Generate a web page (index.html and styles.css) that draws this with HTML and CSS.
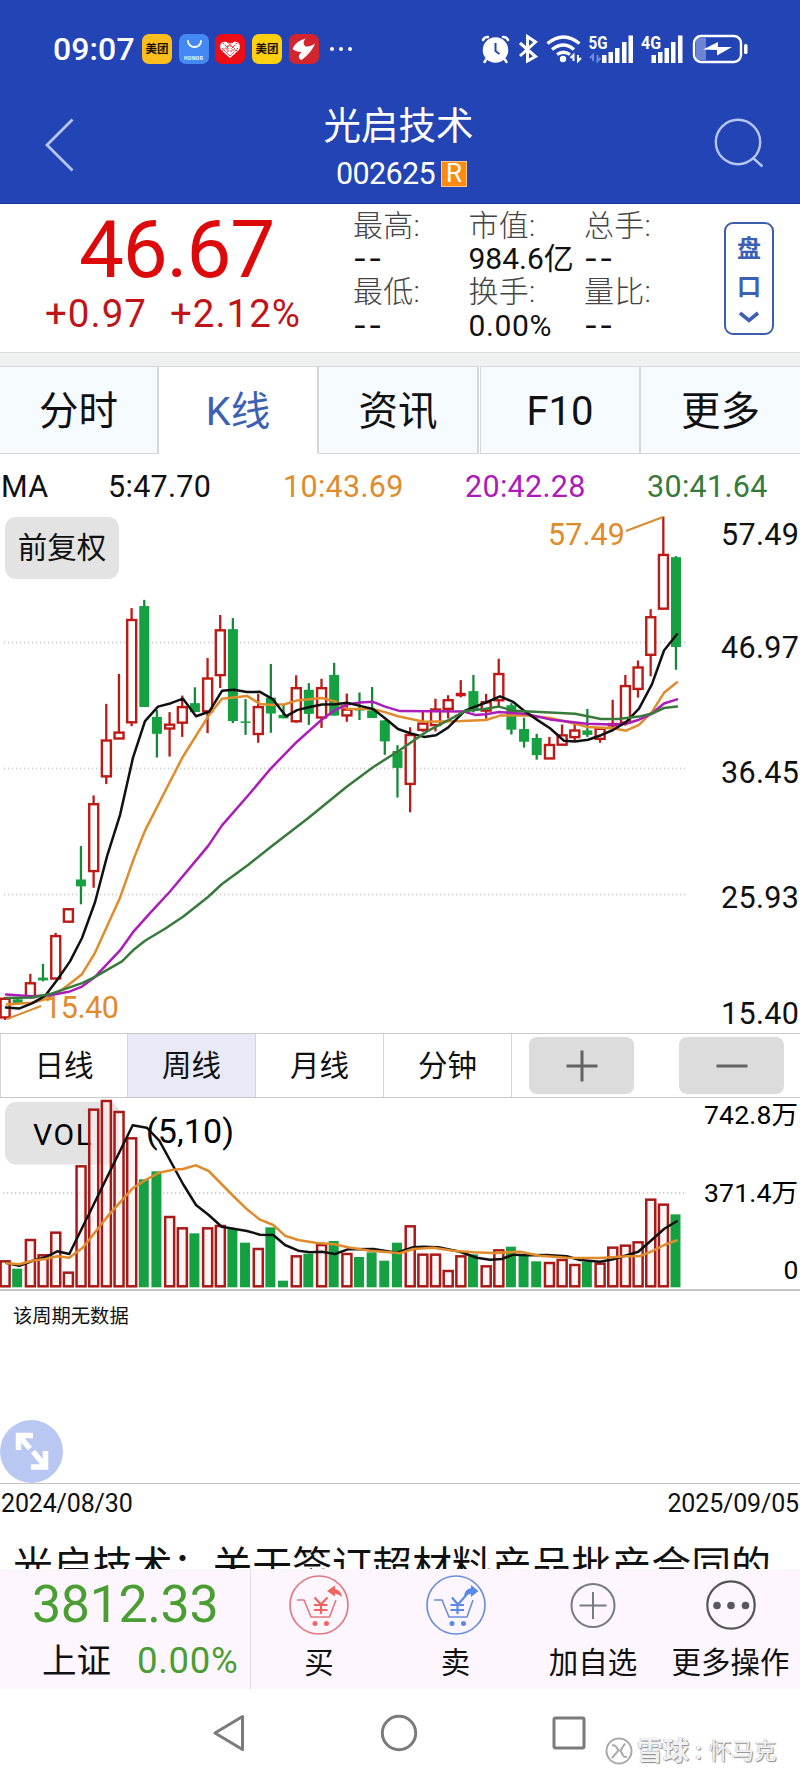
FILE: index.html
```html
<!DOCTYPE html>
<html lang="zh-CN">
<head>
<meta charset="utf-8">
<title>光启技术 002625</title>
<link rel="stylesheet" href="styles.css">
</head>
<body>
<div class="phone">
  <header class="top">
    <div class="status">
      <span class="clock">09:07</span>
      <div class="apps">
        <span class="app app-mt">美团</span>
        <span class="app app-honor"><svg width="30" height="30" viewBox="0 0 30 30"><path d="M9 7a6.5 6 0 0 0 13 0" fill="none" stroke="#fff" stroke-width="1.8" stroke-linecap="round"/></svg><b>HONOR</b></span>
        <span class="app app-heart"><svg width="30" height="30" viewBox="0 0 30 30"><path d="M15 24L6.500 16.500C2.500 11 7.500 4.500 15 9.500C22.500 4.500 27.500 11 23.500 16.500Z" fill="#fff"/><path d="M8 9l6 6M7 14l8 8M12 8l11 10M22 9l-6 6M23 14l-8 8M18 8L7 17M12 12h6v5h-6z" stroke="#ec2028" stroke-width="1" fill="none" stroke-dasharray="2 1"/></svg></span>
        <span class="app app-mt mt2">美团</span>
        <span class="app app-bird"><svg width="30" height="30" viewBox="0 0 30 30"><path d="M16.500 4.500C14 8 14 10 16.500 12.500C20 13 23 11.500 26 9.500C23 17 18 22 12.500 26C9 25 9 21 12.500 18C9 18 5.500 17 3.500 15C6 9 11 6 16.500 4.500Z" fill="#fff"/></svg></span>
      </div>
      <span class="more"><i></i><i></i><i></i></span>
      <svg class="sys" width="270" height="34" viewBox="480 32 270 34" fill="none" stroke="#fff">
        <g stroke-width="2.500" stroke-linecap="round"><circle cx="496.500" cy="50" r="11.500" fill="#fff"/><path d="M484 40q1-3 5-3M509 40q-1-3-5-3M487.500 59l-2 3M505.500 59l2 3"/></g>
        <path d="M496.500 43v8l4 3" stroke="#2244b4" stroke-width="2"/>
        <path d="M521 43l15.500 13.500L528.500 61V36.500l8 5.500L521 56" stroke-width="3"/>
        <g stroke-width="3.200"><path d="M548.500 43.500q16-13 32 0M553 49.500q11.500-9 22 0M558 54.500q6.500-4.500 13 0"/></g>
        <circle cx="564" cy="59" r="3.200" fill="#fff" stroke="none"/>
        <path d="M574.500 61v-6l-3 3M579 55v6l3-3" stroke-width="2"/>
        <path d="M594 61v-6l-3 3M598.500 55v6l3-3" stroke="#6f8ae0" stroke-width="2"/>
        <g fill="#fff" stroke="none">
          <path d="M603 55h4.500v8h-4.500zM609.500 52h4.500v11h-4.500zM616 48h4.500v15h-4.500zM623 42h4.500v21h-4.500zM629.500 35.500h4.500v27.500h-4.500zM652.500 55h4.500v8h-4.500zM659 52h4.500v11h-4.500zM665.500 48h4.500v15h-4.500zM672 42h4.500v21h-4.500zM679 35.500h4.500v27.500h-4.500z"/>
          <text x="589.500" y="49" class="net" textLength="19" lengthAdjust="spacingAndGlyphs">5G</text>
          <text x="642" y="49" class="net" textLength="20" lengthAdjust="spacingAndGlyphs">4G</text>
          <path d="M697 38h10v22h-10z" fill="#6c84d4"/>
          <path d="M704 49.500l15-7.500v5h14l-15 8.500v-5.500z"/>
          <rect x="745" y="44" width="3.500" height="10" rx="1.500"/>
        </g>
        <rect x="695" y="36" width="47" height="26" rx="7" stroke-width="2.400"/>
      </svg>
    </div>
    <div class="bar">
      <svg class="back" width="34" height="58" viewBox="0 0 34 58"><path d="M30.500 3.500L5 29L30.500 54.500" fill="none" stroke="#b5c6f4" stroke-width="2.800"/></svg>
      <div class="name"><h1>光启技术</h1><p><span>002625</span><b>R</b></p></div>
      <svg class="search" width="52" height="52" viewBox="0 0 52 52"><g fill="none" stroke="#b5c6f4" stroke-width="2.400"><circle cx="24" cy="25" r="22.200"/><path d="M39 41l9.500 8.500"/></g></svg>
    </div>
  </header>

  <section class="quote">
    <div class="price"><div class="last">46.67</div><div class="chg"><span>+0.97</span><span>+2.12%</span></div></div>
    <dl><dt>最高:</dt><dd class="none">--</dd><dt>最低:</dt><dd class="none">--</dd></dl>
    <dl><dt>市值:</dt><dd>984.6亿</dd><dt>换手:</dt><dd class="wide">0.00%</dd></dl>
    <dl><dt>总手:</dt><dd class="none">--</dd><dt>量比:</dt><dd class="none">--</dd></dl>
    <div class="pankou"><span>盘</span><span>口</span><svg width="22" height="12" viewBox="0 0 22 12"><path d="M2 2l9 7.500L20 2" fill="none" stroke="#3c60b4" stroke-width="3.600"/></svg></div>
  </section>

  <nav class="tabs"><span>分时</span><span class="on">K线</span><span>资讯</span><span class="f10">F10</span><span>更多</span></nav>

  <div class="ma"><span>MA</span><span>5:47.70</span><span class="o">10:43.69</span><span class="m">20:42.28</span><span class="g">30:41.64</span></div>

  <section class="kline">
    <svg width="800" height="518" viewBox="0 515 800 518">
      <path class="grid" d="M4 642.500H687M4 768.500H687M4 894.500H687"/>
      <g id="candles"></g>
      <g id="averages"></g>
      <path d="M626 531L663 517M7 1019L41 1006" class="lead"/>
      <g class="tag"><text x="548" y="545" textLength="77">57.49</text><text x="44" y="1018" textLength="75">15.40</text></g>
      <g class="axis"><text x="721" y="545" textLength="78">57.49</text><text x="721" y="658" textLength="78">46.97</text><text x="721" y="783" textLength="78">36.45</text><text x="721" y="908" textLength="78">25.93</text><text x="721" y="1024" textLength="78">15.40</text></g>
    </svg>
    <span class="adjust">前复权</span>
  </section>

  <div class="periods">
    <span>日线</span><span class="on">周线</span><span>月线</span><span>分钟</span>
    <button><svg width="32" height="32" viewBox="0 0 32 32"><path d="M0.500 16H31.500M16 0.500V31.500" stroke="#626262" stroke-width="3"/></svg></button>
    <button><svg width="32" height="32" viewBox="0 0 32 32"><path d="M0.500 16H31.500" stroke="#626262" stroke-width="3"/></svg></button>
  </div>

  <section class="volume">
    <svg width="800" height="191" viewBox="0 1098 800 191">
      <rect x="5" y="1102" width="114" height="62.500" rx="11" fill="#e3e3e3"/>
      <text x="33" y="1144.500" class="vol" textLength="59">VOL</text>
      <path class="grid" d="M3 1193H687"/>
      <g id="volumes"></g>
      <text x="146" y="1143" class="param" textLength="88">(5,10)</text>
      <g class="vaxis"><text x="704" y="1124" textLength="94">742.8万</text><text x="704" y="1201.500" textLength="94">371.4万</text><text x="783.500" y="1279">0</text></g>
    </svg>
  </section>

  <section class="empty">
    <p>该周期无数据</p>
    <svg width="63" height="63" viewBox="0 0 63 63"><circle cx="31.500" cy="31.500" r="31.500" fill="#b8c8f3"/><path d="M18.500 30V15.500H33M19 16L30 28.500M31 47H45.500V31M33 31.500L45 46" fill="none" stroke="#fff" stroke-width="5.500"/></svg>
  </section>
  <div class="dates"><span>2024/08/30</span><span>2025/09/05</span></div>
  <div class="news"><p>光启技术：关于签订超材料产品批产合同的</p></div>

  <footer class="actions">
    <div class="index"><strong>3812.33</strong><p><span>上证</span><em>0.00%</em></p></div>
    <div class="act a1"><svg width="60" height="60" viewBox="0 0 60 60" fill="none" stroke="#e47880"><circle cx="30" cy="30" r="29" stroke-width="1.700"/><path d="M8 25h7l7 17h18.500L47 25" stroke-width="1.600"/><path d="M25.500 22.500l6.500 7 6.500-7M25 30h13.500M25 35h13.500M32 29v10" stroke="#f0655f" stroke-width="2.200"/><g fill="#f0655f" stroke="none"><circle cx="26" cy="48.500" r="2.500"/><circle cx="37.500" cy="48.500" r="2.500"/><path d="M38 16l8-5.500v3.500q6 1 7 8-3-3-7-3.500v3z"/></g></svg><span>买</span></div>
    <div class="act a2"><svg width="60" height="60" viewBox="0 0 60 60" fill="none" stroke="#6b8fdb"><circle cx="30" cy="30" r="29" stroke-width="1.700"/><path d="M8 25h8l7 17h18L47 25" stroke-width="1.600"/><path d="M26 22.500l6 7L42 18M24.500 30H38M24.500 35H38M31.500 29v10" stroke="#5a8ae8" stroke-width="2.200"/><g fill="#5a8ae8" stroke="none"><circle cx="26" cy="48.500" r="2.500"/><circle cx="37.500" cy="48.500" r="2.500"/><path d="M38 21q1-7 7-8V10l7.500 6-7.500 6v-3q-3 0-7 2z"/></g></svg><span>卖</span></div>
    <div class="act a3"><svg width="60" height="60" viewBox="0 0 60 60" fill="none" stroke="#777b88" stroke-width="2"><circle cx="30" cy="30.500" r="21.500"/><path d="M16.500 30.500h27M30 17v27"/></g></svg><span>加自选</span></div>
    <div class="act a4"><svg width="60" height="60" viewBox="0 0 60 60"><circle cx="30" cy="30" r="23.700" fill="none" stroke="#555" stroke-width="2.200"/><g fill="#58585e"><circle cx="16" cy="30.500" r="3.800"/><circle cx="30" cy="30.500" r="3.800"/><circle cx="44.500" cy="30.500" r="3.800"/></g></svg><span>更多操作</span></div>
  </footer>

  <div class="sysnav">
    <svg width="32" height="38" viewBox="0 0 32 38"><path d="M2 19L29.500 2.500V35.500Z" stroke-linejoin="round"/></svg>
    <svg width="38" height="38" viewBox="0 0 38 38"><circle cx="19" cy="19" r="16.700"/></svg>
    <svg width="34" height="34" viewBox="0 0 34 34"><rect x="2" y="2" width="30" height="30" rx="1.500"/></svg>
    <div class="mark">
      <svg width="28" height="28" viewBox="0 0 28 28"><circle cx="14" cy="14" r="12.500"/><path d="M7 8.500q2.500-1 4 1l2.500 4L7 21M20 6.500l-4.500 7 2.500 5q1.500 2.500 4 1"/></svg>
      <b>雪球</b><i>:</i><span>怀马克</span>
    </div>
  </div>
</div>
<script src="chart.js"></script>
</body>
</html>
```

FILE: styles.css
```css
* { box-sizing: border-box; margin: 0; padding: 0; }
body { width: 800px; height: 1776px; overflow: hidden; background: #fff; color: #111; font-family: Roboto, "Noto Sans CJK SC", sans-serif; font-weight: 400; }
svg { display: block; flex: none; }
.phone { width: 800px; height: 1776px; display: flex; flex-direction: column; overflow: hidden; }
.phone > * { flex: none; }

.top { height: 204px; background: #2244b4; color: #fff; border-bottom: 1px solid #1b3694; }
.status { height: 66px; padding: 32px 51px 0 53px; display: flex; }
.clock { width: 89px; font-size: 32px; font-weight: 500; line-height: 34px; letter-spacing: .1px; }
.apps { display: flex; gap: 6.7px; padding-top: 2px; }
.app { width: 30px; height: 30px; border-radius: 7px; overflow: hidden; display: flex; flex-direction: column; }
.app-mt { background: #fdbd1c; color: #1c1305; font-size: 11.5px; font-weight: 700; line-height: 30px; align-items: center; }
.mt2 { background: #fed00f; }
.app-honor { background: #4489f3; align-items: center; }
.app-honor b { font-size: 5px; line-height: 6px; margin-top: -9px; letter-spacing: .4px; }
.app-heart { background: #ec0d16; }
.app-bird { background: #d2262f; }
.more { display: flex; gap: 4.500px; padding: 14.500px 0 0 11px; }
.more i { width: 4.500px; height: 4.500px; border-radius: 50%; background: #fff; }
.sys { margin-left: auto; }
.net { font-size: 19px; font-weight: 700; }
.bar { height: 137px; padding: 35px 34px 0 42px; display: flex; justify-content: space-between; }
.back { margin-top: 15px; }
.search { margin-top: 16px; }
.name { text-align: center; padding-left: 7px; }
h1 { font-size: 37.500px; line-height: 46px; font-weight: 400; padding-top: 2px; }
.name p { display: flex; justify-content: center; align-items: center; gap: 6px; margin-top: 9px; padding-left: 6px; font-size: 30.500px; line-height: 32px; letter-spacing: -.6px; }
.name b { width: 26px; height: 26px; margin-top: 0; background: #ff8a12; border: 1px solid #ffc98e; font-size: 26px; line-height: 23px; font-weight: 400; letter-spacing: 0; }

.quote { height: 149px; display: flex; border-bottom: 1px solid #d9dddc; }
.price { width: 353px; padding-top: 6px; color: #dc0a0a; }
.last { padding-left: 79px; font-size: 80px; line-height: 80px; letter-spacing: -1.200px; }
.chg { display: flex; gap: 23px; padding-left: 45px; margin-top: 0; font-size: 38.500px; line-height: 48px; letter-spacing: 1px; color: #c01418; }
.quote dl { width: 115.500px; padding-top: 4.500px; font-size: 30px; line-height: 33.400px; white-space: nowrap; }
.quote dt { color: #444; font-weight: 300; letter-spacing: .3px; }
.quote dd { height: 33.400px; }
.quote .none { font-family: Inter, sans-serif; letter-spacing: 1.500px; }
.quote .wide { letter-spacing: .6px; }
.pankou { width: 50px; height: 113px; margin: 18px 0 0 24.500px; border: 2px solid #3d5ea9; border-radius: 9px; color: #3c60b4; display: flex; flex-direction: column; align-items: center; font-size: 24px; font-weight: 700; line-height: 38px; padding-top: 6px; }
.pankou svg { margin-top: 5px; }

.tabs { height: 101px; border-top: 13px solid #edf1f0; display: flex; }
.tabs span { width: 160px; background: #f6fbff; border: solid #d4d8da; border-width: 1px 2px 1px 0; text-align: center; font-size: 39.500px; line-height: 90px; }
.tabs span:first-child { width: 159px; }
.tabs .on { background: #fff; color: #3c60b4; border-bottom-color: #fff; }
.tabs .f10 { width: 161px; border-left: 1px solid #d4d8da; margin-left: 1px; font-size: 40px; }
.tabs span:last-child { width: 159px; border-right: 0; }

.ma { height: 61px; display: grid; grid-template-columns: 107px 175px 182px 182px 1fr; padding-left: 1px; font-size: 30.500px; line-height: 66px; letter-spacing: .3px; }
.o { color: #e08b2c; } .m { color: #ac1cb8; } .g { color: #387a3b; }

.kline { height: 518px; position: relative; }
.adjust { position: absolute; left: 5px; top: 2px; width: 114px; height: 62px; border-radius: 11px; background: #e3e3e3; text-align: center; font-size: 29.500px; line-height: 62px; }
.grid { stroke: #d2d2d2; stroke-width: 2; stroke-dasharray: 1.300 2.700; }
.lead { stroke: #d98a35; stroke-width: 2; }
.tag { fill: #e08b2c; font-size: 30.500px; }
.axis { font-size: 30.500px; fill: #111; }
.up-line { stroke: #bd1a17; stroke-width: 2.300; fill: none; }
.up-box { stroke: #bd1a17; stroke-width: 2.400; fill: #fff; }
.up-solid { fill: #cf1013; }
.down-line { stroke: #16883a; stroke-width: 2.300; fill: none; }
.down-box { fill: #15a042; }
.vol-box { stroke: #a81a18; stroke-width: 2.500; fill: #fff0f0; fill-opacity: .5; }
.avg { fill: none; stroke-width: 2.500; stroke-linejoin: round; stroke-linecap: round; }

.periods { height: 65px; border: solid #c9c9c9; border-width: 1px 0; display: flex; align-items: center; }
.periods span { width: 128px; height: 63px; border-right: 1px solid #d4d4da; text-align: center; font-size: 29.500px; line-height: 64px; }
.periods span:first-child { border-left: 1px solid #d4d4da; }
.periods .on { background: #e8eaf7; }
.periods button { width: 105px; height: 57px; margin-left: 17px; border: 0; border-radius: 8px; background: #dcdcdc; display: flex; align-items: center; justify-content: center; }
.periods button + button { margin-left: 45px; }

.volume { height: 193px; border-bottom: 2px solid #c5c5c5; overflow: hidden; }
.vol { font-size: 30px; }
.param { font-size: 34px; }
.vaxis { font-size: 26.500px; }

.empty { height: 193px; border-bottom: 1px solid #c5c5c5; display: flex; flex-direction: column; justify-content: space-between; }
.empty p { padding: 12px 0 0 13px; font-size: 19.300px; line-height: 28px; }
.dates { height: 59px; display: flex; justify-content: space-between; padding: 0 1px; font-size: 25px; line-height: 39px; letter-spacing: -.15px; }
.news { height: 26px; overflow: hidden; padding-left: 13px; }
.news p { font-size: 39.900px; line-height: 40px; margin-top: 0; white-space: nowrap; font-family: "Noto Sans CJK SC", sans-serif; }

.actions { height: 120px; background: #fdf6fe; display: flex; }
.index { width: 251px; height: 120px; border-right: 1px solid #e2dce3; color: #4a9e32; }
.index strong { display: block; padding-left: 32px; font-size: 52px; line-height: 72px; font-weight: 400; letter-spacing: -.4px; }
.index p { display: flex; padding-left: 42px; gap: 26px; line-height: 40px; }
.index span { color: #111; font-size: 34.500px; }
.index em { font-style: normal; font-size: 36.500px; letter-spacing: .7px; }
.act { display: flex; flex-direction: column; align-items: center; padding-top: 6px; font-size: 29.500px; }
.act span { line-height: 44px; margin-top: 6px; }
.a1 { width: 136px; }
.a2 { width: 137px; }
.a3 { width: 138px; }
.a4 { width: 137px; }

.sysnav { height: 87px; display: flex; align-items: center; position: relative; padding: 0 0 0 213px; }
.sysnav svg { fill: none; stroke: #7b7b7b; stroke-width: 3; }
.sysnav > svg:nth-child(2) { margin-left: 135px; }
.sysnav > svg:nth-child(3) { margin-left: 134px; }
.mark { position: absolute; left: 605px; top: 46px; display: flex; align-items: center; height: 32px; color: #f2f2f2; text-shadow: 1px 1px 1px #888, -.5px -.5px 1px #bbb; line-height: 32px; white-space: nowrap; }
.mark svg { stroke: #a9a9a9; stroke-width: 2; }
.mark b { font-size: 26px; margin-left: 4px; }
.mark i { font-style: normal; font-size: 24px; font-weight: 700; width: 20px; padding-left: 6px; }
.mark span { font-size: 22.500px; }
```

FILE: chart.js
```js
// Weekly candles: direction, high, body top, body bottom, low (plot units).
const candles = [
  ['r',1443,1447,1504,1510],['g',1447,1450,1463,1465],['r',1376,1402,1445,1447],['g',1347,1387,1395,1398],
  ['r',1257,1265,1391,1391],['r',1187,1187,1226,1226],['g',1005,1102,1122,1174],['r',858,882,1079,1126],
  ['r',592,697,804,825],['r',505,674,694,694],['r',314,347,647,657],['g',290,308,601,601],
  ['g',610,630,679,748],['r',616,651,665,745],['r',568,600,648,688],['g',544,590,616,616],
  ['r',459,517,615,677],['r',334,377,510,546],['g',343,375,642,648],['g',578,643,647,682],
  ['r',563,600,681,705],['g',476,574,620,676],['g',593,624,634,634],['r',509,545,644,647],
  ['g',532,551,621,653],['r',519,545,633,662],['g',473,508,626,626],['r',562,607,627,644],
  ['g',559,607,611,639],['g',543,611,633,633],['g',639,640,701,740],['g',712,729,778,864],
  ['r',660,681,826,907],['r',612,648,669,673],['r',577,607,655,672],['r',567,580,608,634],
  ['s',523,560,570,573],['g',508,555,613,617],['r',563,586,613,635],['r',461,504,583,600],
  ['g',590,596,667,681],['g',632,665,702,719],['g',679,691,741,754],['r',688,710,752,752],
  ['r',652,682,712,712],['r',650,668,690,700],['g',607,669,682,688],['r',660,663,695,705],
  ['s',580,647,658,663],['r',508,539,648,655],['r',466,485,550,574],['r',317,339,451,512],
  ['r',48,158,317,317],['g',163,166,427,493]
];
const averages = {
  '#e08b2c': [6.7,1465,32,1460,45,1450,63,1420,82,1377,95,1315,120,1155,134,1040,145,960,167,835,183,745,209,625,222,577,247,569,260,592,273,595,285,593,297,582,322,575,335,585,347,606,373,607,385,616,398,628,424,644,462,642,486,639,500,626,525,625,550,633,575,650,587,659,613,663,626,670,639,653,652,615,664,560,677,529],
  '#ac1cb8': [6,1436,32,1441,50,1438,70,1427,82,1413,95,1385,120,1308,133,1255,150,1200,170,1137,208,1005,222,945,247,862,271,779,297,702,322,637,335,610,347,594,360,588,373,586,385,600,400,613,463,614,475,624,486,622,499,616,525,621,550,637,587,650,613,652,626,650,639,638,652,620,664,591,677,579],
  '#111': [6,1474,19,1477,32,1462,45,1440,58,1390,70,1340,82,1272,95,1168,107,1035,120,915,133,748,145,642,158,600,171,590,183,577,196,628,209,615,222,554,234,551,247,558,260,557,273,579,286,628,297,610,310,601,322,594,335,593,347,589,360,598,373,607,385,634,398,665,411,678,424,688,436,683,448,661,465,612,486,588,500,570,513,586,525,614,538,640,550,663,564,699,575,701,588,696,601,683,613,668,626,645,639,606,652,535,664,437,677,390],
  '#387a3b': [6,1446,32,1445,50,1435,82,1403,95,1385,122,1340,134,1305,145,1280,165,1245,183,1210,208,1153,222,1115,248,1060,271,1007,308,924,347,832,373,776,400,726,427,672,448,640,465,613,486,606,499,600,513,612,540,616,575,621,601,636,618,636,639,629,652,620,664,604,677,600]
};
const volumes = 'r721 g746 r657 r703 r635 r755 r436 r266 r240 r273 r352 g478 g454 r588 r622 g640 r622 r615 g627 g668 r684 g622 g782 r706 g701 r672 g663 r699 g711 g697 g722 g668 r616 r701 r701 r750 r706 g703 r736 r688 g680 g707 g724 r726 r717 r732 g726 r728 r680 r674 r664 r536 r551 g583'.split(' ');
const volumeAverages = {
  '#111': [20,729,58,737,97,723,135,712,172,694,208,702,322,470,398,316,440,323,478,362,549,492,588,555,626,585,665,620,741,633,780,644,820,645,855,675,895,692,930,697,965,695,1005,702,1043,688,1120,687,1190,698,1240,682,1270,680,1315,682,1380,695,1430,713,1470,719,1505,717,1540,704,1585,706,1640,705,1700,709,1740,720,1800,725,1840,718,1880,706,1915,695,1955,660,1993,626,2030,604],
  '#e08b2c': [20,730,58,733,97,722,135,717,172,709,208,713,250,682,322,590,398,505,440,478,478,458,520,449,549,447,588,436,626,453,700,528,741,568,780,599,820,615,855,647,895,660,950,669,1005,673,1043,682,1110,692,1170,697,1200,700,1240,687,1300,683,1360,692,1420,697,1480,699,1560,695,1620,707,1700,713,1800,714,1880,709,1920,708,1955,694,1993,675,2030,661]
};

const priceY = v => 500 + v / 2.904;
const volumeY = v => 1020 + v / 3;
const centre = i => 5 + 12.66 * i;

const hollow = (cls, x, y0, y1) =>
  `<rect class="${cls}" x="${x - 4.4}" y="${y0 + 1}" width="9" height="${Math.max(1, y1 - y0 - 2)}"/>`;
const solid = (cls, x, y0, y1) =>
  `<rect class="${cls}" x="${x - 5}" y="${y0}" width="10" height="${Math.max(1.5, y1 - y0)}"/>`;

function polyline(points, sx, fy, colour) {
  let d = '';
  for (let i = 0; i < points.length; i += 2) {
    d += `${i ? 'L' : 'M'}${(points[i] / sx).toFixed(1)} ${fy(points[i + 1]).toFixed(1)}`;
  }
  return `<path class="avg" d="${d}" stroke="${colour}"/>`;
}

// The body is drawn over the wick.
document.getElementById('candles').innerHTML = candles.map(([kind, ...values], i) => {
  const x = centre(i);
  const [high, top, bottom, low] = values.map(priceY);
  const wick = `<path class="${kind === 'g' ? 'down' : 'up'}-line" d="M${x} ${high}V${low}"/>`;
  if (kind === 'r') return wick + hollow('up-box', x, top - 0.5, bottom + 0.5);
  return wick + solid(kind === 'g' ? 'down-box' : 'up-solid', x, top, bottom);
}).join('');

document.getElementById('averages').innerHTML =
  Object.entries(averages).map(([c, p]) => polyline(p, 1, priceY, c)).join('');

document.getElementById('volumes').innerHTML = volumes.map((v, i) => {
  const y = volumeY(+v.slice(1));
  return v[0] === 'r' ? hollow('vol-box', centre(i), y, 1287.3) : solid('down-box', centre(i) - 0.5, y, 1287.3);
}).join('') + Object.entries(volumeAverages).map(([c, p]) => polyline(p, 3, volumeY, c)).join('');
```
